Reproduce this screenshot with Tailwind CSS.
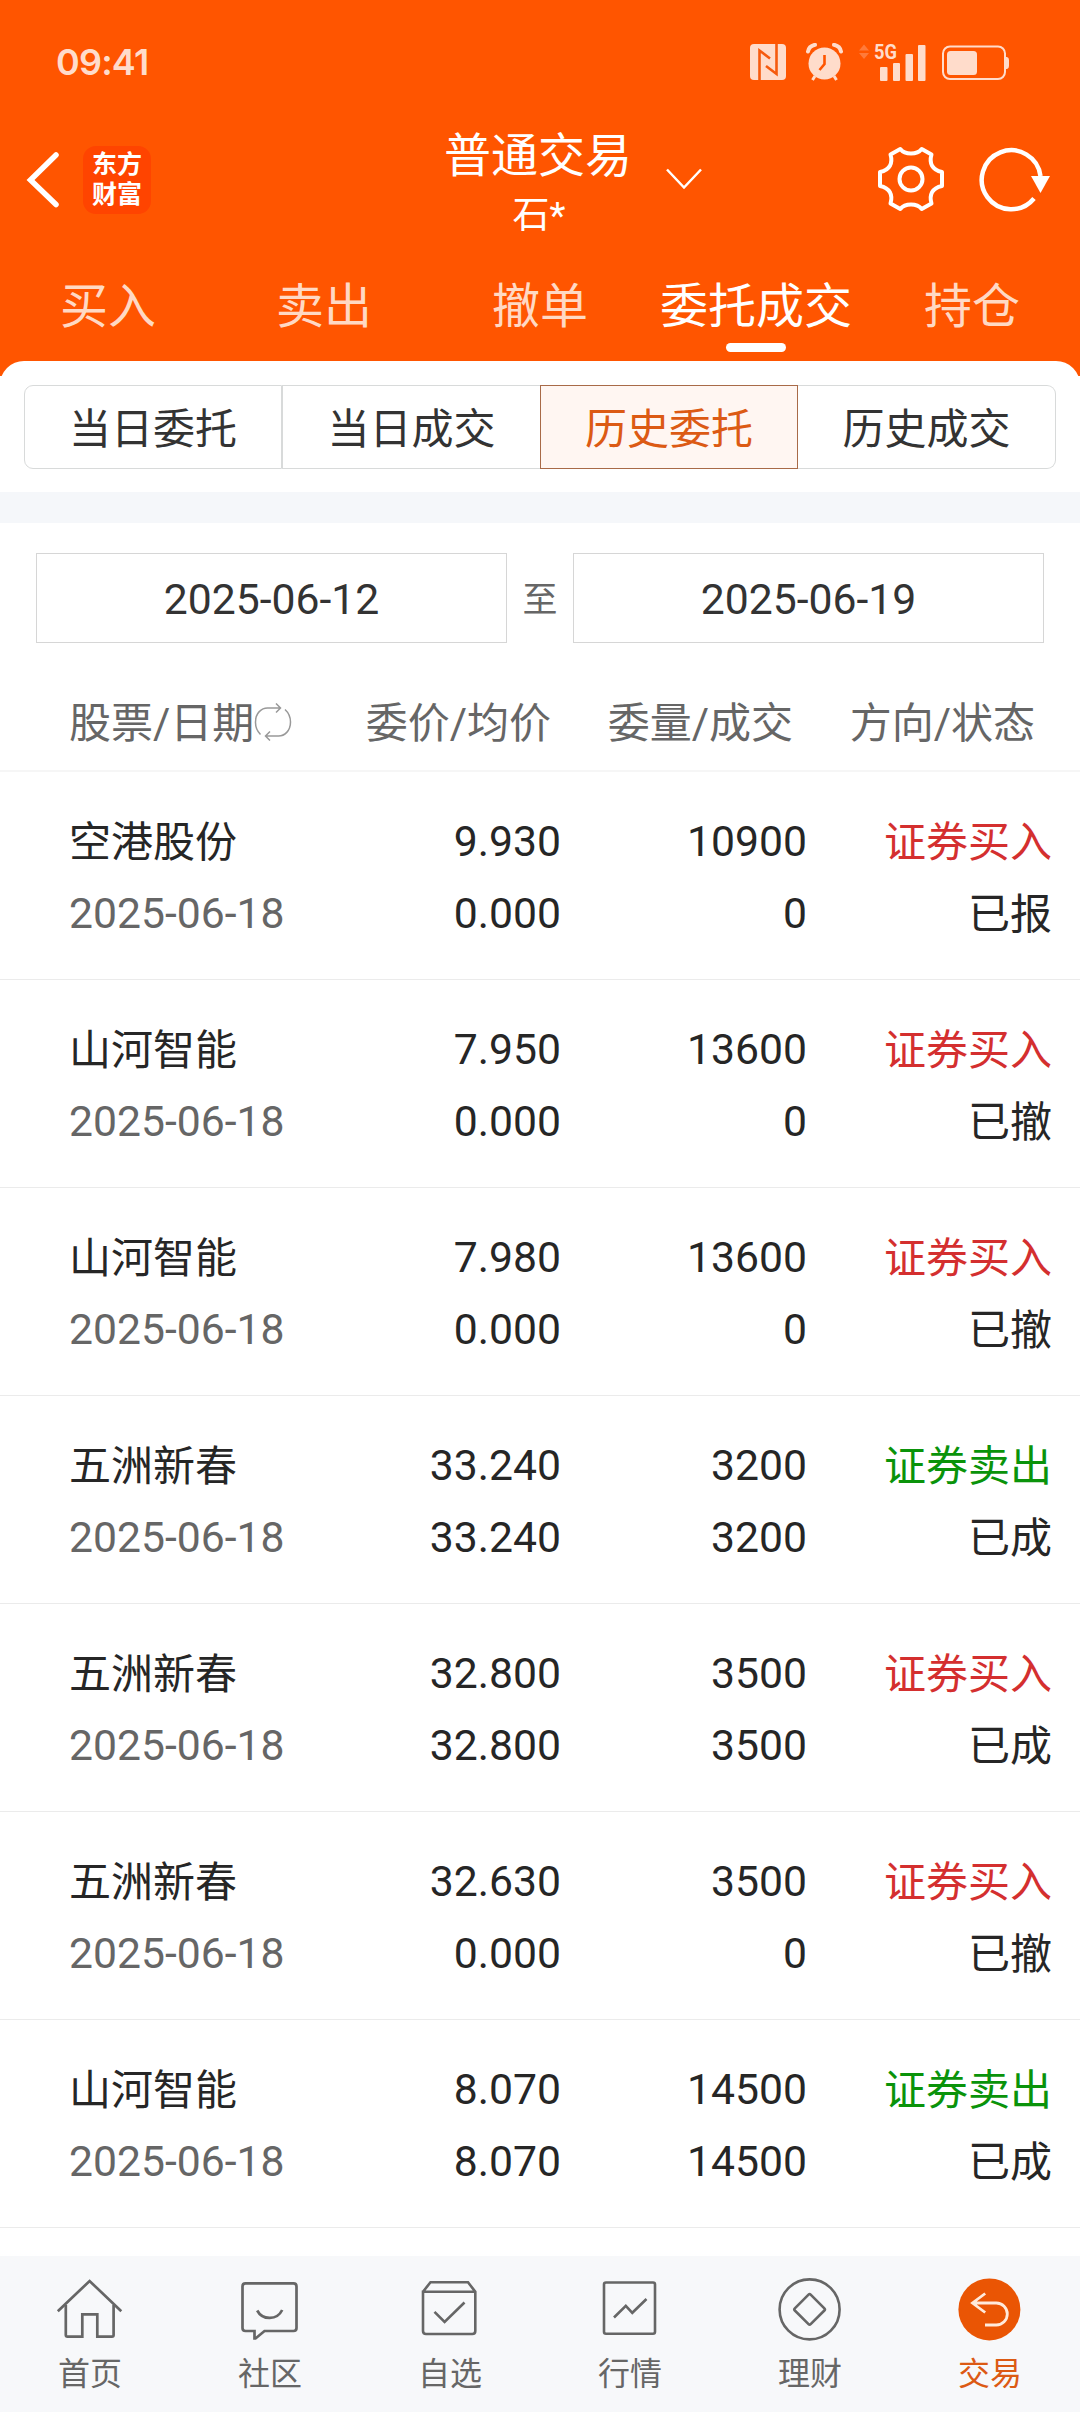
<!DOCTYPE html>
<html lang="zh-CN">
<head>
    <meta charset="UTF-8">
    <meta name="viewport" content="width=device-width, initial-scale=1.0">
    <title>普通交易 - 历史委托</title>
    <script src="https://cdn.jsdelivr.net/npm/@tailwindcss/browser@4"></script>
</head>
<body class="bg-white font-['Roboto','Noto_Sans_CJK_SC',sans-serif] text-[#262626]">
    <div class="w-[1080px] h-[2412px] flex flex-col overflow-hidden">
        <!-- Header -->
        <header class="h-[376px] shrink-0 bg-[#ff5500] flex flex-col">
            <!-- Status bar -->
            <div class="h-[124px] shrink-0 flex items-center justify-between pl-[56px] pr-[70px] text-[#ffdccb]">
                <span class="font-['Inter'] font-semibold text-[36px] leading-none tracking-[-0.8px]">09:41</span>
                <div class="flex items-center">
                    <svg class="w-9 h-9 mr-5" viewBox="0 0 36 36">
                        <rect width="36" height="36" rx="4" fill="currentColor"/>
                        <path d="M9.500 36V6.500L20 14.500M26.500 0V30L16 22" fill="none" stroke="#f65a0e" stroke-width="2.600"/>
                    </svg>
                    <svg class="w-[37px] h-[38px] mr-4" viewBox="0 0 37 38">
                        <circle cx="18.500" cy="20.500" r="16" fill="currentColor"/>
                        <path d="M2 8.500Q3 3 9 1.800M35 8.500Q34 3 28 1.800" fill="none" stroke="currentColor" stroke-width="4" stroke-linecap="round"/>
                        <path d="M9 33l-2.500 4M28 33l2.500 4" stroke="currentColor" stroke-width="3"/>
                        <path d="M18.500 12v9l-5 6" fill="none" stroke="#ff5500" stroke-width="2.600"/>
                    </svg>
                    <svg class="w-[67px] h-[53px] mr-4" viewBox="0 -8 67 53">
                        <path d="M0 6.500L5 0.500l5 6zM0 9h10l-5 6z" fill="#ff7a3a"/>
                        <text x="15" y="15" font-size="21" font-weight="700" font-family="Roboto" textLength="23" lengthAdjust="spacingAndGlyphs" fill="currentColor">5G</text>
                        <g fill="currentColor">
                            <rect x="21" y="23" width="7.500" height="14" rx="1"/>
                            <rect x="34" y="19" width="7" height="18" rx="1"/>
                            <rect x="46.500" y="10" width="7.500" height="27" rx="1"/>
                            <rect x="59" y="1" width="7.500" height="36" rx="1"/>
                        </g>
                    </svg>
                    <svg class="w-[68px] h-[35px]" viewBox="0 0 68 35">
                        <rect x="1" y="1.500" width="62" height="32.500" rx="7" fill="none" stroke="currentColor" stroke-width="2"/>
                        <rect x="5" y="6" width="30" height="24" rx="3.500" fill="currentColor"/>
                        <path d="M63.500 12h1.500q2 .5 2 3v6q0 2.500-2 3h-1.500z" fill="currentColor"/>
                    </svg>
                </div>
            </div>

            <!-- Title bar -->
            <div class="h-[112px] shrink-0 flex items-center text-white">
                <svg class="w-9 h-[60px] ml-[25px]" viewBox="0 0 36 60">
                    <path d="M31 5L5.500 30 31 54.500" fill="none" stroke="currentColor" stroke-width="5.500" stroke-linecap="round"/>
                </svg>
                <div class="w-[68px] h-[68px] ml-[22px] rounded-[13px] bg-[#ff4400] font-bold text-[25px] leading-[30px] text-center pt-[4px]">
                    东方<br>财富
                </div>
                <div class="ml-[275px] w-[226px] flex flex-col items-center pt-[11px]">
                    <span class="text-[47px] leading-[60px] mr-[2px]">普通交易</span>
                    <span class="text-[37px] leading-[60px]">石*</span>
                </div>
                <svg class="w-[38px] h-[24px] ml-[13px] mt-[-4px]" viewBox="0 0 38 24">
                    <path d="M2 3.500L19 21.500 36 3.500" fill="none" stroke="currentColor" stroke-width="2.500"/>
                </svg>
                <svg class="w-[72px] h-[72px] ml-[172px] mt-[-2px]" viewBox="-36 -36 72 72" fill="none" stroke="currentColor" stroke-width="4" stroke-linejoin="round">
                    <path d="M-10.700-30C-6-24 6-24 10.700-30L20.500-24.500C18-16 21-9 31-7V7C21 9 18 16 20.500 24.500L10.700 30C6 24-6 24-10.700 30L-20.500 24.500C-18 16-21 9-31 7V-7C-21-9-18-16-20.500-24.500Z"/>
                    <circle r="11.500"/>
                </svg>
                <svg class="w-[74px] h-[72px] ml-[29px] mt-[-2px]" viewBox="-36 -36 74 72">
                    <path d="M22 19.500A29.500 29.500 0 1 1 28.500-3" fill="none" stroke="currentColor" stroke-width="4.500"/>
                    <path d="M19-3h19L28.500 14z" fill="currentColor"/>
                </svg>
            </div>

            <!-- Main tabs -->
            <nav class="grid grid-cols-5 text-center text-[48px] leading-[72px] text-[#ffd9c4] pt-[35px]">
                <a>买入</a>
                <a>卖出</a>
                <a>撤单</a>
                <a class="text-white whitespace-nowrap flex flex-col items-center">委托成交<span class="w-[60px] h-[9px] rounded-full bg-white"></span></a>
                <a>持仓</a>
            </nav>
        </header>

        <!-- Sub tabs -->
        <section class="mt-[-15px] h-[131px] shrink-0 bg-white rounded-t-[24px] px-6 pt-6">
            <div class="grid grid-cols-4 h-[84px] text-center text-[42px] leading-[87px] text-[#333]">
                <a class="h-[84px] border border-[#d8dada] rounded-l-[9px]">当日委托</a>
                <a class="h-[84px] border border-r-0 border-[#d8dada]">当日成交</a>
                <a class="h-[84px] border border-[#a86a48] bg-[#fff6f2] text-[#dc5a14]">历史委托</a>
                <a class="h-[84px] border border-l-0 border-[#d8dada] rounded-r-[9px]">历史成交</a>
            </div>
        </section>
        <div class="h-[31px] shrink-0 bg-[#f5f7fa]"></div>

        <!-- Date range -->
        <section class="h-[120px] shrink-0 flex pt-[30px] px-9 text-[#333]">
            <div class="w-[471px] h-[90px] border border-[#d6d6d6] text-center text-[42.7px] leading-[91px]">2025-06-12</div>
            <div class="w-[66px] text-center text-[35px] leading-[96px] text-[#666]">至</div>
            <div class="w-[471px] h-[90px] border border-[#d6d6d6] text-center text-[42.7px] leading-[91px]">2025-06-19</div>
        </section>

        <!-- Table head -->
        <div class="h-[129px] shrink-0 flex pt-[45px] border-b-2 border-[#f6f6f6] text-[42px] leading-[72px] text-[#666] whitespace-nowrap">
            <div class="w-[298px] h-[72px] pl-[69px] flex">股票/日期
                <svg class="w-[38px] h-[38px] mt-[15px] shrink-0" viewBox="0 0 38 38" fill="none" stroke="#999" stroke-width="1.500">
                    <path d="M6.500 31.500A17 17 0 0 1 1.500 19C1.500 10 7.500 5 13.500 5H26M22 0.500L26.500 5 22 9.500"/>
                    <path d="M31 6.500A17 17 0 0 1 36.500 19C36.500 28 30.500 33 24.500 33H12M16 28.500L11.500 33 16 37.500"/>
                </svg>
            </div>
            <div class="w-[253px] text-right">委价/均价</div>
            <div class="w-[242px] text-right">委量/成交</div>
            <div class="w-[242px] text-right">方向/状态</div>
        </div>

        <!-- Order list -->
        <main id="orders" class="flex-1 overflow-hidden"></main>

        <!-- Bottom navigation -->
        <footer class="h-[156px] shrink-0 bg-[#f7f8fa] grid grid-cols-6 pt-4 text-[32px] leading-[60px] text-[#666]">
            <a class="flex flex-col items-center">
                <svg class="w-[72px] h-[72px]" viewBox="0 0 72 72" fill="none" stroke="currentColor" stroke-width="2.700">
                    <path d="M3.800 39.300L35.600 9 67.300 39.300"/>
                    <path d="M11.800 33V63q0 1.700 1.700 1.700H28.300V42.300H43.300V64.700H58q1.600 0 1.600-1.700V33"/>
                </svg>
                首页
            </a>
            <a class="flex flex-col items-center">
                <svg class="w-[72px] h-[72px]" viewBox="0 0 72 72" fill="none" stroke="currentColor" stroke-width="2.700">
                    <path d="M11.500 11.400H59.500q3 0 3 3V56q0 3-3 3H30.500L21.500 66.500H20.500V59H11.500q-3 0-3-3V14.400q0-3 3-3z"/>
                    <path d="M23.200 38.500C28.500 48.500 43 48.500 48.200 38"/>
                </svg>
                社区
            </a>
            <a class="flex flex-col items-center">
                <svg class="w-[72px] h-[72px]" viewBox="0 0 72 72" fill="none" stroke="currentColor" stroke-width="2.600">
                    <path d="M9 19.700L16.500 10.300H54L61.300 19.700V59q0 3-3 3H12q-3 0-3-3V19.700H61.300"/>
                    <path d="M20.500 39.800L30.600 50 50.500 30.500"/>
                </svg>
                自选
            </a>
            <a class="flex flex-col items-center">
                <svg class="w-[72px] h-[72px]" viewBox="0 0 72 72" fill="none" stroke="currentColor" stroke-width="2.600">
                    <rect x="10" y="10.500" width="51" height="51.300" rx="2"/>
                    <path d="M20 45.500L31.800 33.800 38.300 40.800 52.500 27"/>
                </svg>
                行情
            </a>
            <a class="flex flex-col items-center">
                <svg class="w-[72px] h-[72px]" viewBox="0 0 72 72" fill="none" stroke="currentColor" stroke-width="2.600">
                    <circle cx="35.600" cy="37.400" r="30"/>
                    <rect x="24.400" y="26.200" width="22.400" height="22.400" rx="1.500" transform="rotate(45 35.600 37.400)"/>
                </svg>
                理财
            </a>
            <a class="flex flex-col items-center text-[#dc5a14]">
                <svg class="w-[72px] h-[72px]" viewBox="0 0 72 72" fill="none">
                    <circle cx="35.400" cy="37.400" r="31" fill="#ea5504"/>
                    <path d="M31.200 21.500L18.500 31 31.200 40.500M18.500 31H42.300A11 11 0 0 1 42.300 53H31" stroke="#ffeadb" stroke-width="2.800"/>
                </svg>
                交易
            </a>
        </footer>
    </div>

    <script>
        const orders = [
            { name: '空港股份', price: '9.930', avg: '0.000', qty: '10900', done: '0', side: 'buy', status: '已报' },
            { name: '山河智能', price: '7.950', avg: '0.000', qty: '13600', done: '0', side: 'buy', status: '已撤' },
            { name: '山河智能', price: '7.980', avg: '0.000', qty: '13600', done: '0', side: 'buy', status: '已撤' },
            { name: '五洲新春', price: '33.240', avg: '33.240', qty: '3200', done: '3200', side: 'sell', status: '已成' },
            { name: '五洲新春', price: '32.800', avg: '32.800', qty: '3500', done: '3500', side: 'buy', status: '已成' },
            { name: '五洲新春', price: '32.630', avg: '0.000', qty: '3500', done: '0', side: 'buy', status: '已撤' },
            { name: '山河智能', price: '8.070', avg: '8.070', qty: '14500', done: '14500', side: 'sell', status: '已成' }
        ];

        document.getElementById('orders').innerHTML = orders.map(o => `
            <div class="h-[208px] flex pt-[33px] border-b border-[#ebebeb] text-[42.7px] leading-[72px] whitespace-nowrap">
                <div class="w-[300px] pl-[69px]">
                    <div class="pt-1 text-[42px] leading-[68px]">${o.name}</div>
                    <div class="text-[#666]">2025-06-18</div>
                </div>
                <div class="w-[261px] text-right"><div>${o.price}</div><div>${o.avg}</div></div>
                <div class="w-[246px] text-right"><div>${o.qty}</div><div>${o.done}</div></div>
                <div class="w-[245px] pt-[2px] text-right text-[42px]">
                    <div class="${o.side === 'buy' ? 'text-[#d42f2f]' : 'text-[#0a930a]'}">${o.side === 'buy' ? '证券买入' : '证券卖出'}</div>
                    <div>${o.status}</div>
                </div>
            </div>
        `).join('');
    </script>
</body>
</html>
